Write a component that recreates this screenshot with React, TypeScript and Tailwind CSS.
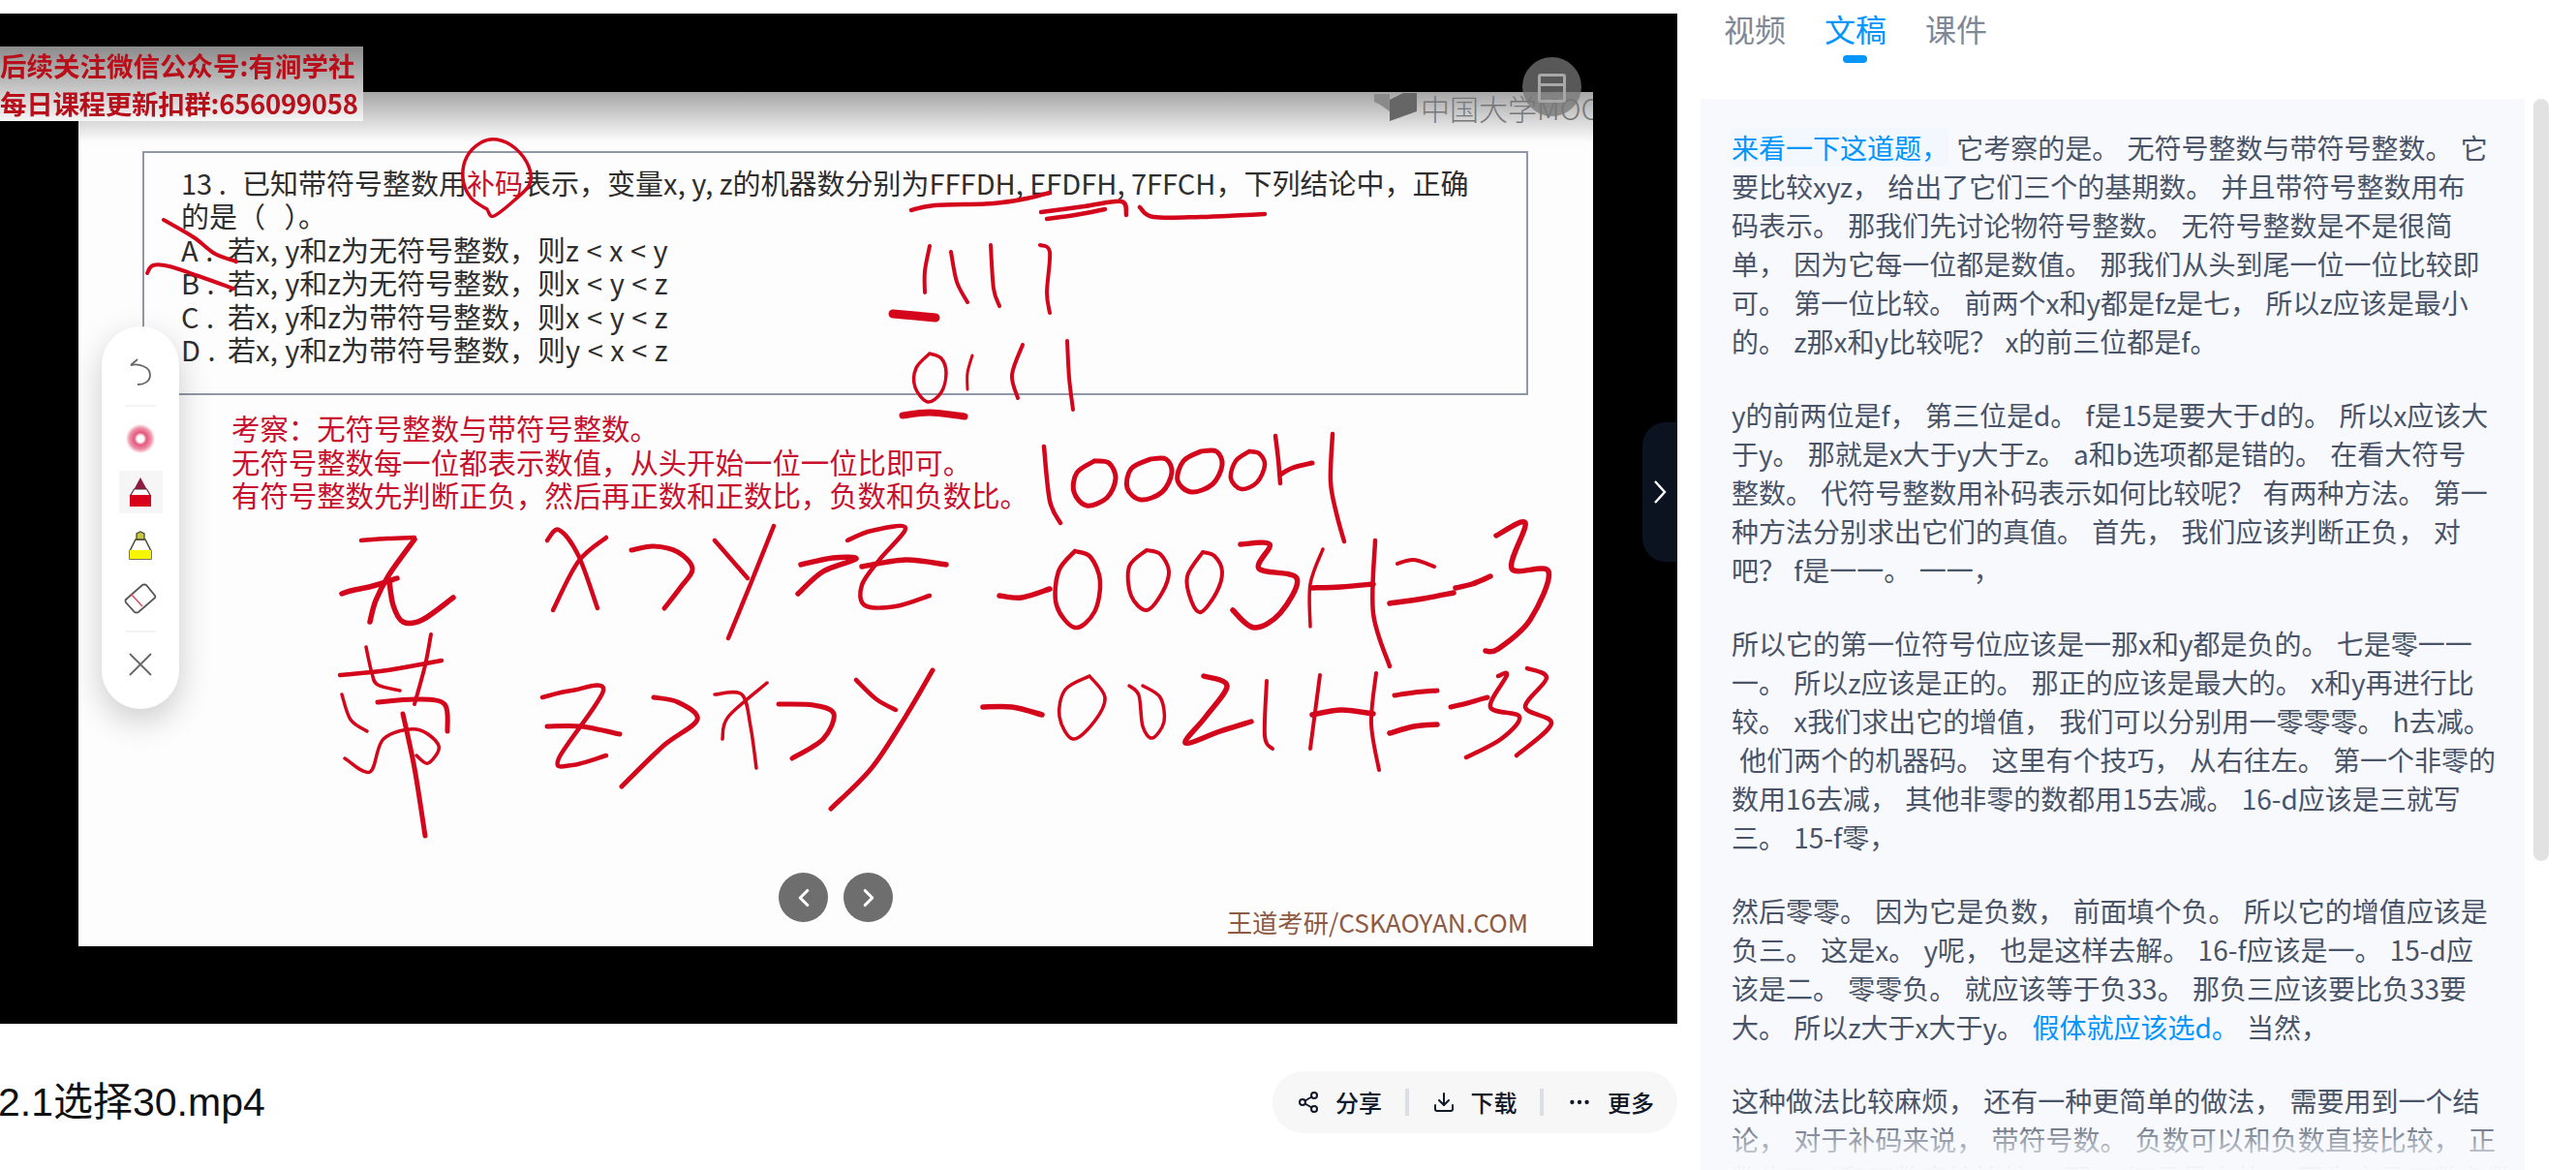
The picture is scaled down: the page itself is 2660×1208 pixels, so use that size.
import {ChevronLeft, ChevronRight, Download, Ellipsis, Share2} from "lucide-react";

const cjk = "font-['Noto_Sans_CJK_SC',sans-serif]";

// handwriting in the video frame, in page coordinates: [stroke width, x, y, x, y, ...]
const strokes: number[][] = [
    // circle around the printed word
    [3.5, 503, 216, 486, 204, 478, 184, 482, 162, 497, 147, 513, 144, 532, 153, 546, 172, 547, 190, 532, 206, 510, 223, 504, 218],
    // crossed out options
    [4, 169, 227, 200, 245, 222, 262, 244, 270],
    [4, 152, 282, 158, 274, 175, 275, 205, 285, 241, 298],
    // underlines
    [4.5, 941, 217, 965, 212, 1026, 210, 1060, 205, 1084, 199],
    [4.5, 1075, 219, 1120, 213, 1158, 208, 1163, 222],
    [4.5, 1081, 226, 1110, 222, 1141, 216],
    [4.5, 1177, 214, 1191, 224, 1240, 224, 1306, 221],
    // 1111
    [4, 960, 254, 955, 280, 955, 302],
    [4, 982, 260, 988, 291, 999, 312],
    [4, 1023, 253, 1026, 298, 1032, 316],
    [4, 1074, 253, 1084, 260, 1081, 302, 1084, 323],
    [9, 922, 324, 945, 326, 966, 328],
    // 0111
    [3.5, 960, 365, 946, 380, 945, 400, 958, 415, 972, 405, 977, 385, 972, 370, 960, 365],
    [3, 1004, 367, 999, 385, 999, 402],
    [4, 1056, 356, 1045, 387, 1051, 411],
    [4, 1102, 352, 1104, 390, 1108, 423],
    [7, 932, 429, 960, 426, 996, 430],
    // 10000H1
    [4.5, 1078, 461, 1084, 517, 1095, 540],
    [5, 1130, 476, 1112, 488, 1109, 508, 1122, 522, 1143, 514, 1152, 494, 1145, 478, 1130, 476],
    [5, 1188, 474, 1168, 484, 1164, 504, 1178, 516, 1200, 508, 1210, 488, 1204, 474, 1188, 474],
    [5, 1240, 466, 1222, 476, 1216, 496, 1230, 508, 1252, 500, 1262, 480, 1256, 466, 1240, 466],
    [4.5, 1290, 466, 1276, 476, 1271, 494, 1282, 505, 1298, 498, 1306, 480, 1300, 468, 1290, 466],
    [4.5, 1317, 450, 1320, 475, 1322, 499],
    [5, 1322, 490, 1335, 483, 1355, 478],
    [4.5, 1376, 448, 1374, 497, 1380, 530, 1388, 559],
    // first handwritten line, left glyph
    [4.5, 373, 558, 400, 556, 428, 555],
    [5.5, 353, 613, 362, 610, 385, 605, 410, 597],
    [5.5, 428, 557, 402, 593, 388, 620, 382, 642],
    [5.5, 402, 600, 406, 625, 416, 642, 436, 640, 468, 617],
    // x > y > z
    [4.5, 565, 558, 577, 547, 597, 573, 617, 628],
    [4.5, 626, 555, 597, 580, 571, 630],
    [5, 652, 568, 675, 564, 700, 570, 715, 587, 703, 606, 686, 628],
    [4.5, 738, 558, 772, 597],
    [4.5, 799, 543, 775, 603, 752, 659],
    [5.5, 827, 583, 860, 576, 884, 577, 850, 590, 824, 613],
    [4.5, 875, 558, 900, 548, 935, 545, 908, 578, 890, 604, 893, 625, 925, 626, 960, 615],
    [5.5, 890, 585, 935, 578, 977, 583],
    // -0003H=-3
    [5.5, 1032, 615, 1055, 617, 1084, 608],
    [4.5, 1110, 569, 1093, 590, 1091, 625, 1110, 648, 1130, 632, 1136, 600, 1126, 575, 1110, 569],
    [4, 1184, 568, 1166, 585, 1168, 615, 1184, 630, 1200, 612, 1207, 590, 1198, 572, 1184, 568],
    [4, 1242, 570, 1226, 595, 1230, 620, 1240, 632, 1256, 612, 1262, 590, 1254, 574, 1242, 570],
    [5.5, 1281, 562, 1311, 562, 1300, 587, 1339, 597, 1322, 633, 1295, 648, 1273, 630],
    [3.5, 1366, 567, 1353, 603, 1353, 647],
    [5.5, 1355, 607, 1385, 606, 1418, 603],
    [4.5, 1420, 558, 1418, 633, 1435, 688],
    [4, 1443, 582, 1460, 578, 1481, 585],
    [5.5, 1435, 623, 1470, 618, 1501, 612],
    [5.5, 1503, 607, 1520, 603, 1539, 595],
    [5.5, 1545, 553, 1575, 540, 1561, 587, 1599, 590, 1580, 640, 1547, 670, 1534, 672],
    // second handwritten line, left glyph
    [4.5, 351, 697, 400, 692, 456, 682],
    [3.5, 378, 668, 384, 695, 390, 707, 413, 713],
    [4, 445, 655, 439, 687, 428, 727],
    [3.5, 353, 717, 362, 743, 379, 755],
    [5, 390, 725, 430, 722, 459, 727, 462, 755],
    [3.5, 356, 783, 382, 797, 396, 763, 430, 753, 453, 770, 442, 788, 430, 780],
    [5, 416, 737, 428, 793, 439, 863],
    // z > x > y
    [4.5, 560, 720, 590, 713, 623, 713, 577, 783, 591, 790, 626, 780],
    [5, 565, 750, 600, 750, 640, 758],
    [5, 675, 720, 700, 725, 720, 743, 685, 770, 642, 812],
    [3.5, 738, 717, 766, 717, 775, 750, 781, 793],
    [3.5, 792, 705, 752, 740, 746, 763],
    [5, 804, 727, 840, 728, 861, 737, 850, 763, 818, 783],
    [4.5, 884, 702, 905, 722, 925, 733],
    [5, 963, 692, 935, 740, 900, 793, 858, 835],
    // -0021H=-33
    [5.5, 1015, 730, 1045, 730, 1076, 738],
    [3.5, 1125, 698, 1100, 712, 1094, 740, 1108, 763, 1130, 745, 1141, 720, 1125, 698],
    [3.5, 1166, 708, 1176, 718, 1180, 750, 1190, 762, 1202, 745, 1198, 720, 1180, 708],
    [5.5, 1243, 698, 1267, 708, 1245, 740, 1224, 767, 1260, 755, 1292, 745],
    [4, 1308, 703, 1306, 760, 1314, 773],
    [4, 1363, 697, 1353, 773],
    [5.5, 1355, 738, 1385, 733, 1418, 737],
    [4, 1421, 695, 1416, 747, 1424, 795],
    [5, 1440, 718, 1460, 715, 1484, 713],
    [5.5, 1435, 757, 1460, 750, 1484, 748],
    [5, 1498, 730, 1515, 726, 1536, 720],
    [4.5, 1547, 698, 1556, 697, 1539, 730, 1569, 740, 1550, 763, 1514, 782],
    [4.5, 1577, 690, 1597, 700, 1575, 730, 1602, 747, 1566, 780],
];

function strokePath(pts: number[]) {
    const p: [number, number][] = [];
    for (let i = 0; i < pts.length; i += 2) p.push([pts[i], pts[i + 1]]);
    let d = `M${p[0][0]} ${p[0][1]}`;
    for (let i = 0; i < p.length - 1; i++) {
        const a = p[Math.max(i - 1, 0)];
        const b = p[i];
        const c = p[i + 1];
        const e = p[Math.min(i + 2, p.length - 1)];
        d += ` C${b[0] + (c[0] - a[0]) / 6} ${b[1] + (c[1] - a[1]) / 6} ${c[0] - (e[0] - b[0]) / 6} ${c[1] - (e[1] - b[1]) / 6} ${c[0]} ${c[1]}`;
    }
    return d;
}

const blue = "text-[#0095ff]";

const transcript: React.ReactNode[][] = [
    [
        <><span className={`inline-block bg-[#f3f8fe] ${blue}`}>来看一下这道题，</span> 它考察的是。 无符号整数与带符号整数。 它</>,
        "要比较xyz， 给出了它们三个的基期数。 并且带符号整数用布",
        "码表示。 那我们先讨论物符号整数。 无符号整数是不是很简",
        "单， 因为它每一位都是数值。 那我们从头到尾一位一位比较即",
        "可。 第一位比较。 前两个x和y都是fz是七， 所以z应该是最小",
        "的。 z那x和y比较呢？ x的前三位都是f。",
    ],
    [
        "y的前两位是f， 第三位是d。 f是15是要大于d的。 所以x应该大",
        "于y。 那就是x大于y大于z。 a和b选项都是错的。 在看大符号",
        "整数。 代符号整数用补码表示如何比较呢？ 有两种方法。 第一",
        "种方法分别求出它们的真值。 首先， 我们应该判断正负， 对",
        "吧？ f是一一。 一一，",
    ],
    [
        "所以它的第一位符号位应该是一那x和y都是负的。 七是零一一",
        "一。 所以z应该是正的。 那正的应该是最大的。 x和y再进行比",
        "较。 x我们求出它的增值， 我们可以分别用一零零零。 h去减。",
        " 他们两个的机器码。 这里有个技巧， 从右往左。 第一个非零的",
        "数用16去减， 其他非零的数都用15去减。 16-d应该是三就写",
        "三。 15-f零，",
    ],
    [
        "然后零零。 因为它是负数， 前面填个负。 所以它的增值应该是",
        "负三。 这是x。 y呢， 也是这样去解。 16-f应该是一。 15-d应",
        "该是二。 零零负。 就应该等于负33。 那负三应该要比负33要",
        <>大。 所以z大于x大于y。 <span className={blue}>假体就应该选d。</span> 当然，</>,
    ],
    [
        "这种做法比较麻烦， 还有一种更简单的做法， 需要用到一个结",
        "论， 对于补码来说， 带符号数。 负数可以和负数直接比较， 正",
        "数也可以和正数直接比较， 那， 还是最大的。 因为它是正数负数",
    ],
];

const options = [
    ["A .", "若x, y和z为无符号整数，则z < x < y"],
    ["B .", "若x, y和z为无符号整数，则x < y < z"],
    ["C .", "若x, y和z为带符号整数，则x < y < z"],
    ["D .", "若x, y和z为带符号整数，则y < x < z"],
];

function Toolbar() {
    return <div className="absolute left-[24px] top-[242px] flex h-[395px] w-[80px] flex-col items-center gap-[11px] rounded-full bg-white pt-[26px] shadow-[0_12px_34px_rgba(0,0,0,0.2)]">
        <div className="flex h-[44px] w-[45px] items-center justify-center">
            <svg width="26" height="30" viewBox="0 0 26 30" fill="none" stroke="#666" strokeWidth="1.8">
                <path d="M3 7 C12 5 23 9 23 17 C23 24 17 27 10 27"/>
                <path d="M3 7 L10 1"/>
            </svg>
        </div>
        <div className="h-[2px] w-[32px] bg-[#f4f4f4]"/>
        <div className="flex h-[44px] w-[45px] items-center justify-center">
            <div className="size-[30px] rounded-full bg-[radial-gradient(circle,#fff_16%,#e4587c_30%,#ee8ea6_52%,transparent_72%)]"/>
        </div>
        <div className="flex h-[44px] w-[45px] items-center justify-center bg-[#f6f6f6]">
            <svg width="24" height="30" viewBox="0 0 24 30">
                <path d="M12 0 L5.5 12 L18.5 12 Z" fill="#8c1c40"/>
                <path d="M5.5 12 L1.5 19 L22.5 19 L18.5 12 Z" fill="#fff" stroke="#5a2a38" strokeWidth="1.2"/>
                <path d="M1 18 L23 18 L23 30 L1 30 Z" fill="#d8001a"/>
            </svg>
        </div>
        <div className="flex h-[44px] w-[45px] items-center justify-center">
            <svg width="26" height="30" viewBox="0 0 26 30">
                <path d="M2 29 L2 21 L8 9 L18 9 L24 21 L24 29 Z" fill="#fff" stroke="#4a4a30" strokeWidth="1.5"/>
                <path d="M2 20 L24 20 L24 29 L2 29 Z" fill="#f6f600"/>
                <path d="M9 9 L9 3 L13 1 L17 3 L17 9 Z" fill="#c8c840" stroke="#4a4a30" strokeWidth="1.3"/>
            </svg>
        </div>
        <div className="flex h-[44px] w-[45px] items-center justify-center">
            <svg width="34" height="32" viewBox="0 0 34 32" fill="none">
                <path d="M2 17 L19 2 Q21 1 23 2 L32 13 Q33 15 31 16 L15 30 Q13 31 11 30 L2 20 Q1 18 2 17 Z" stroke="#555" strokeWidth="1.8"/>
                <path d="M7 11 L19 24" stroke="#d8506a" strokeWidth="1.6"/>
            </svg>
        </div>
        <div className="h-[2px] w-[32px] bg-[#f4f4f4]"/>
        <div className="flex h-[44px] w-[45px] items-center justify-center">
            <svg width="26" height="26" viewBox="0 0 26 26" stroke="#666" strokeWidth="1.8">
                <path d="M2 2 L24 24 M24 2 L2 24"/>
            </svg>
        </div>
    </div>;
}

function Slide() {
    return <div className="relative h-[882px] w-[1564px] overflow-hidden bg-[#fdfdfd] pl-[66px] pt-[61px]">
        <div className="absolute inset-x-0 top-0 h-[52px] bg-linear-to-b from-[#a6a6a6] to-[#fdfdfd]/0"/>
        <div className="absolute right-[-28px] top-0 flex items-center gap-[4px] text-[#777]">
            <svg width="44" height="31" viewBox="0 0 44 31">
                <path d="M0 2 L16 2 L16 20 L6 13 L0 10 Z" fill="#8a8a8a"/>
                <path d="M16 8 L30 1 L44 1 L44 20 L16 30 Z" fill="#666"/>
            </svg>
            <span className={`${cjk} whitespace-nowrap text-[30px] font-light leading-[30px]`}>中国大学MOOC</span>
        </div>
        <div className="relative h-[252px] w-[1431px] border-2 border-[#8f97a8] pl-[38px] pt-[13px] text-[29px] leading-[34.4px] text-[#2e2e2e]">
            <p className="whitespace-nowrap">
                <span className="inline-block w-[63px]">13 .</span>已知带符号整数用<span className="text-[#c8102e]">补码</span>表示，变量x, y, z的机器数分别为FFFDH, EFDFH, 7FFCH，下列结论中，正确
            </p>
            <p className="whitespace-pre">的是（   ）。</p>
            {options.map(([label, text]) => <p key={label} className="whitespace-nowrap [word-spacing:1px]">
                <span className="inline-block w-[48px]">{label}</span>{text}
            </p>)}
        </div>
        <div className="ml-[92px] mt-[16px] text-[29.4px] leading-[34.5px] text-[#c8102e]">
            <p>考察：无符号整数与带符号整数。</p>
            <p>无符号整数每一位都表示数值，从头开始一位一位比即可。</p>
            <p>有符号整数先判断正负，然后再正数和正数比，负数和负数比。</p>
        </div>
        <Toolbar/>
        <div className="absolute bottom-[8px] right-[67px] text-[26.3px] leading-[34px] text-[#8f5a44]">王道考研/CSKAOYAN.COM</div>
        <div className="absolute bottom-[25px] left-[723px] flex gap-[16px]">
            <div className="flex size-[51px] items-center justify-center rounded-full bg-[#6e6e6e] text-white">
                <ChevronLeft size={30} strokeWidth={2.5}/>
            </div>
            <div className="flex size-[51px] items-center justify-center rounded-full bg-[#6e6e6e] text-white">
                <ChevronRight size={30} strokeWidth={2.5}/>
            </div>
        </div>
    </div>;
}

function VideoFrame() {
    return <div className="relative h-[1043px] w-[1732px] overflow-hidden bg-black">
        <div className={`${cjk} h-full pl-[81px] pt-[81px] blur-[0.6px]`}>
            <Slide/>
            <div className="absolute left-0 top-[34px] h-[77px] w-[375px] whitespace-nowrap bg-linear-to-b from-[#8c8c8c] to-[#f6f6f6] text-[27.5px] font-bold leading-[39px] text-[#b80f1a]">
                <p>后续关注微信公众号:有涧学社</p>
                <p className="tracking-[-0.3px]">每日课程更新扣群:656099058</p>
            </div>
            <div className="absolute left-[1572px] top-[45px] flex size-[61px] items-start justify-center rounded-full bg-[rgba(117,117,117,0.75)] pt-[17px]">
                <div className="h-[30px] w-[29px] rounded-[3px] border-[3px] border-[#a8a8a8]">
                    <div className="mt-[7px] h-[3px] bg-[#a8a8a8]"/>
                </div>
            </div>
            <svg className="absolute inset-0" width="1732" height="1043" viewBox="0 14 1732 1043" fill="none" stroke="#d4061c" strokeLinecap="round" strokeLinejoin="round">
                {strokes.map(([w, ...pts], i) => <path key={i} d={strokePath(pts)} strokeWidth={w}/>)}
            </svg>
        </div>
        <div className="absolute right-0 top-[422px] flex h-[144px] w-[36px] items-center justify-center rounded-l-[24px] bg-[#0b1220] text-white">
            <svg width="16" height="26" viewBox="0 0 16 26" fill="none" stroke="currentColor" strokeWidth="2.4">
                <path d="M3 2 L13 13 L3 24"/>
            </svg>
        </div>
    </div>;
}

function ActionBar() {
    const item = "flex items-center gap-[16px]";
    return <div className="flex h-[64px] w-[418px] items-center justify-between rounded-full bg-[#f7f7f8] pl-[25px] pr-[24px] text-[24px] font-medium leading-none text-[#111827]">
        <div className={item}><Share2 size={24} strokeWidth={2}/>分享</div>
        <div className="h-[28px] w-[4px] bg-[#dcdee6]"/>
        <div className={item}><Download size={24} strokeWidth={2}/>下载</div>
        <div className="h-[28px] w-[4px] bg-[#dcdee6]"/>
        <div className={item}><Ellipsis size={26} strokeWidth={2}/>更多</div>
    </div>;
}

function Tabs() {
    return <div className="flex h-[102px] gap-[40px] pl-[24px] pt-[10px] text-[32px] leading-[38px] text-[#808896]">
        <span>视频</span>
        <span className="relative text-[#0095ff]">
            文稿
            <span className="absolute left-[19px] top-[47px] h-[8px] w-[25px] rounded-full bg-[#0095ff]"/>
        </span>
        <span>课件</span>
    </div>;
}

function Transcript() {
    return <div className="relative h-[1106px] w-[851px] overflow-hidden bg-[#f7f9fd] pl-[32px] pt-[30px] text-[28px] leading-[40px] text-[#4a5468]">
        {transcript.map((para, i) => <div key={i} className="mb-[36px]">
            {para.map((line, j) => <div key={j} className="h-[40px] whitespace-pre [word-spacing:2px]">{line}</div>)}
        </div>)}
        <div className="absolute inset-x-0 bottom-0 h-[56px] bg-linear-to-b from-[#f7f9fd]/0 to-[#f7f9fd]"/>
    </div>;
}

export default function App() {
    return <div lang="zh-CN" className={`${cjk} flex h-[1208px] w-[2660px] overflow-hidden bg-white`}>
        <div className="w-[1732px] pt-[14px]">
            <VideoFrame/>
            <div className="mt-[49px] flex items-center justify-between">
                <h1 className="ml-[-2px] font-['Liberation_Sans','Noto_Sans_CJK_SC',sans-serif] text-[41px] font-normal leading-none text-[#111]">2.1选择30.mp4</h1>
                <ActionBar/>
            </div>
        </div>
        <div className="ml-[24px] flex-1">
            <Tabs/>
            <div className="flex gap-[9px]">
                <Transcript/>
                <div className="h-[787px] w-[16px] rounded-full bg-[#e2e2e2]"/>
            </div>
        </div>
    </div>;
}
